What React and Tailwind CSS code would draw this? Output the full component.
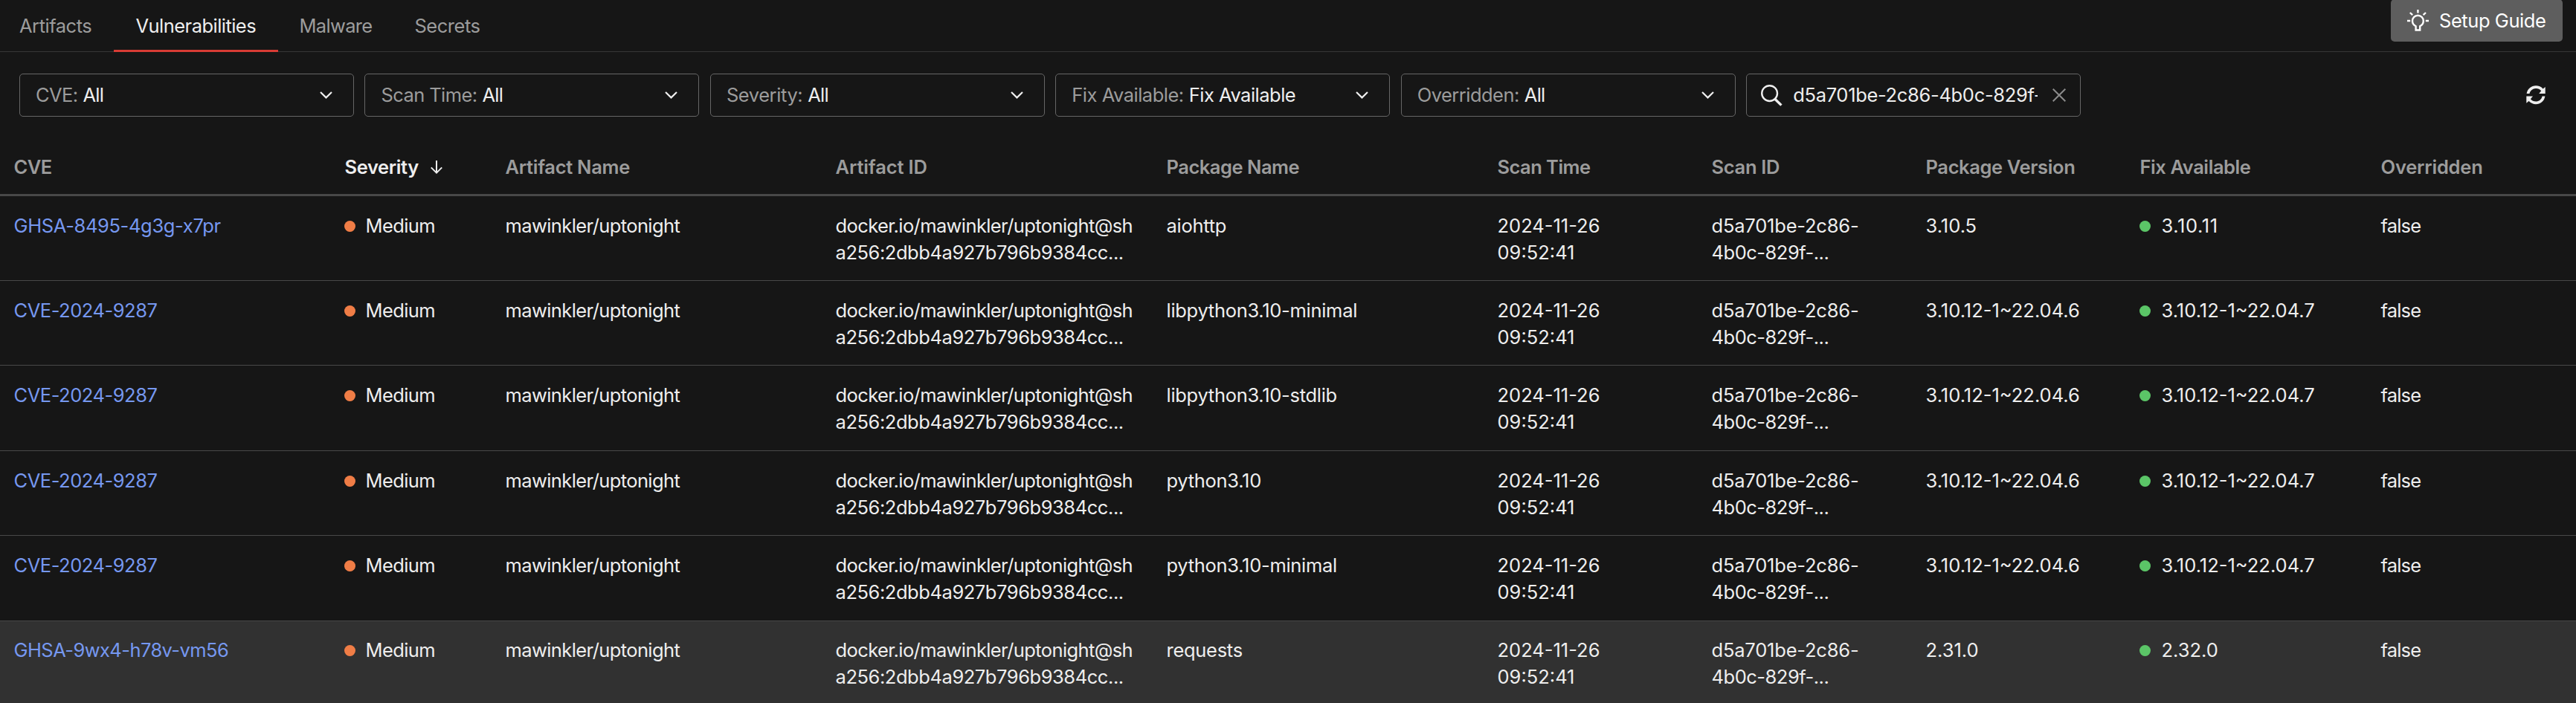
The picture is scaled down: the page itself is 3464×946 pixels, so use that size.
import React from "react";

const grid =
  "grid grid-cols-[445px_216px_444px_445px_445px_288px_288px_288px_324px_281px] *:pl-[18.5px]";

const headers = [
  ["CVE", "tracking-[-0.52px]"],
  ["Severity", "tracking-[-0.38px]"],
  ["Artifact Name", "tracking-[-0.29px]"],
  ["Artifact ID", "tracking-[-0.12px]"],
  ["Package Name", "tracking-[-0.48px]"],
  ["Scan Time", "tracking-[-0.55px]"],
  ["Scan ID", "tracking-[-0.3px]"],
  ["Package Version", "tracking-[-0.37px]"],
  ["Fix Available", "tracking-[-0.42px]"],
  ["Overridden", "tracking-[-0.2px]"],
];

const rows = [
  { cve: "GHSA-8495-4g3g-x7pr", pkg: "aiohttp", version: "3.10.5", fix: "3.10.11", fixClass: "tracking-[0.61px]", height: "h-[114px] pt-[22px]", cveClass: "tracking-[-0.36px]" },
  { cve: "CVE-2024-9287", pkg: "libpython3.10-minimal", version: "3.10.12-1~22.04.6", fix: "3.10.12-1~22.04.7", height: "h-[114px] pt-[22px]", cveClass: "tracking-[-0.46px]" },
  { cve: "CVE-2024-9287", pkg: "libpython3.10-stdlib", version: "3.10.12-1~22.04.6", fix: "3.10.12-1~22.04.7", height: "h-[115px] pt-[22px]", cveClass: "tracking-[-0.46px]" },
  { cve: "CVE-2024-9287", pkg: "python3.10", version: "3.10.12-1~22.04.6", fix: "3.10.12-1~22.04.7", height: "h-[114px] pt-[22px]", cveClass: "tracking-[-0.46px]" },
  { cve: "CVE-2024-9287", pkg: "python3.10-minimal", version: "3.10.12-1~22.04.6", fix: "3.10.12-1~22.04.7", height: "h-[115px] pt-[22px]", cveClass: "tracking-[-0.46px]" },
  { cve: "GHSA-9wx4-h78v-vm56", pkg: "requests", version: "2.31.0", fix: "2.32.0", height: "h-[115px] pt-[21px]", cveClass: "tracking-[-0.57px]", active: true },
];

const filters = [
  ["CVE:", "All", "tracking-[-0.62px]"],
  ["Scan Time:", "All", "tracking-[-0.59px]"],
  ["Severity:", "All", "tracking-[-0.42px]"],
  ["Fix Available:", "Fix Available", "tracking-[-0.5px]"],
  ["Overridden:", "All", "tracking-[-0.53px]"],
];

const tabs = [
  ["Artifacts", "w-[153px] pl-[26px] tracking-[-0.48px]"],
  ["Vulnerabilities", "w-[221px] pl-[29.5px] tracking-[-0.54px]"],
  ["Malware", "w-[155px] pl-[28.5px] tracking-[-0.68px]"],
  ["Secrets", "w-[145px] pl-[28.5px] tracking-[-0.49px]"],
];

function Dot({ className }) {
  return <span className={`-ml-[0.5px] size-[15px] shrink-0 rounded-full ${className}`} />;
}

function Tabs() {
  return (
    <nav className="flex h-[70px] border-b border-[#363636]">
      {tabs.map(([t, cls]) => (
        <div
          key={t}
          className={`flex h-[70px] items-center border-b-[3px] pt-[3px] ${cls} ${
            t === "Vulnerabilities" ? "border-[#d83c35] text-[#eeeeee]" : "border-transparent text-[#9c9c9c]"
          }`}
        >
          {t}
        </div>
      ))}
      <button className="-mt-px mr-[18px] ml-auto flex h-[57px] w-[231px] items-center rounded-[5px] bg-[#5e5e5e] pl-[22px] tracking-[-0.43px] text-white">
        <svg className="mr-[14px] size-[29px]" viewBox="0 0 29 29" fill="none" stroke="currentColor" strokeWidth="2.4">
          <path d="M11.6 27.5V22.2C8.6 20.6 7 18 7 15.2A7.4 7.4 0 0 1 21.8 15.2C21.8 18 20.2 20.6 17.2 22.2V27.5Z" />
          <path d="M14.4 0V4.4M0 15H4.2M24.8 15H29M3.8 4L7.2 7.2M25 4L21.6 7.2" />
        </svg>
        Setup Guide
      </button>
    </nav>
  );
}

function Filters() {
  return (
    <div className="flex h-[116px] items-center gap-[14.45px] pr-[41px] pl-[26px]">
      {filters.map(([label, value, cls]) => (
        <div key={label} className="flex h-[58px] w-[450px] items-center rounded-[5px] border border-[#666666] pr-[28px] pl-[21px] text-[#9c9c9c]">
          <span className={cls}>{label}</span>
          <span className={`ml-[7px] text-[#eeeeee] ${value === "All" ? "tracking-[-0.73px]" : "tracking-[-0.5px]"}`}>{value}</span>
          <svg className="ml-auto h-[10px] w-[17px]" viewBox="0 0 17 10" fill="none" stroke="#eeeeee" strokeWidth="2.2">
            <path d="M1 1L8.5 8.4L16 1" />
          </svg>
        </div>
      ))}
      <div className="flex h-[58px] w-[450px] items-center rounded-[5px] border border-[#666666] pr-[19px] pl-[19px]">
        <svg className="mr-[14px] size-[29px] shrink-0" viewBox="0 0 29 29" fill="none" stroke="#eeeeee">
          <circle cx="11.6" cy="11.6" r="10.4" strokeWidth="2.4" />
          <path d="M18.8 19.2L27.4 27.6" strokeWidth="3.4" />
        </svg>
        <input
          readOnly
          value="d5a701be-2c86-4b0c-829f-"
          className="w-[329px] bg-transparent p-0 tracking-[-0.32px] text-[#eeeeee] outline-none"
        />
        <svg className="ml-auto size-[18px] shrink-0" viewBox="0 0 18 18" stroke="#8c8c8c" strokeWidth="2">
          <path d="M0.7 0.7L17.3 17.3M17.3 0.7L0.7 17.3" />
        </svg>
      </div>
      <svg className="ml-auto size-[26px]" viewBox="0 0 26 26" fill="#eeeeee">
        <path d="M0.6 11C1.6 4.6 7 0.3 13.1 0.3C16.8 0.3 20.2 1.8 22.6 4.4L25.7 2V11H17.2L20.2 7.2C18.4 5.2 15.9 4 13.1 4C8.9 4 5.4 6.9 4.5 11Z" />
        <path d="M25.4 14.4C24.4 20.8 19.2 25.2 13 25.2C9.4 25.2 6 23.6 3.6 21L0.3 23.8V14.4H9L5.9 18.2C7.7 20.4 10.2 21.5 13 21.5C17.2 21.5 20.7 18.6 21.6 14.4Z" />
      </svg>
    </div>
  );
}

function Row({ row }) {
  return (
    <div className={`${grid} ${row.height} border-b border-[#484848] ${row.active ? "bg-[#313131]" : ""}`}>
      <a className={`text-[#7698f0] ${row.cveClass}`}>{row.cve}</a>
      <div className="flex h-9 items-center gap-[13.5px] tracking-[-0.61px]">
        <Dot className="bg-[#f07d46]" />
        Medium
      </div>
      <div className="tracking-[-0.6px]">mawinkler/uptonight</div>
      <div>
        <div className="tracking-[-0.61px]">docker.io/mawinkler/uptonight@sh</div>
        <div className="tracking-[-0.44px]">a256:2dbb4a927b796b9384cc...</div>
      </div>
      <div className="tracking-[-0.29px]">{row.pkg}</div>
      <div>
        <div>2024-11-26</div>
        <div>09:52:41</div>
      </div>
      <div>
        <div className="tracking-[-0.2px]">d5a701be-2c86-</div>
        <div className="tracking-[-0.48px]">4b0c-829f-...</div>
      </div>
      <div>{row.version}</div>
      <div className={`flex h-9 items-center gap-[14.5px] ${row.fixClass ?? ""}`}>
        <Dot className="bg-[#5bc567]" />
        {row.fix}
      </div>
      <div className="tracking-[-0.82px]">false</div>
    </div>
  );
}

export default function App() {
  return (
    <div className="h-[946px] w-[3464px] overflow-hidden bg-[#161616] font-['Inter',sans-serif] text-[25.5px] leading-9 text-[#eeeeee]">
      <Tabs />
      <Filters />
      <div className={`${grid} h-[78px] items-center border-b-[3px] border-[#484848] pt-[2px] font-semibold text-[#9c9c9c]`}>
        {headers.map(([label, cls]) => (
          <div key={label} className={`flex items-center ${cls} ${label === "Severity" ? "text-[#eeeeee]" : ""}`}>
            {label}
            {label === "Severity" && (
              <svg className="ml-[16px] h-[18px] w-[16px]" viewBox="0 0 16 18" fill="none" stroke="currentColor" strokeWidth="2">
                <path d="M8 0V16.4M0.8 9.4L8 16.6L15.2 9.4" />
              </svg>
            )}
          </div>
        ))}
      </div>
      {rows.map((row, i) => (
        <Row key={i} row={row} />
      ))}
    </div>
  );
}
